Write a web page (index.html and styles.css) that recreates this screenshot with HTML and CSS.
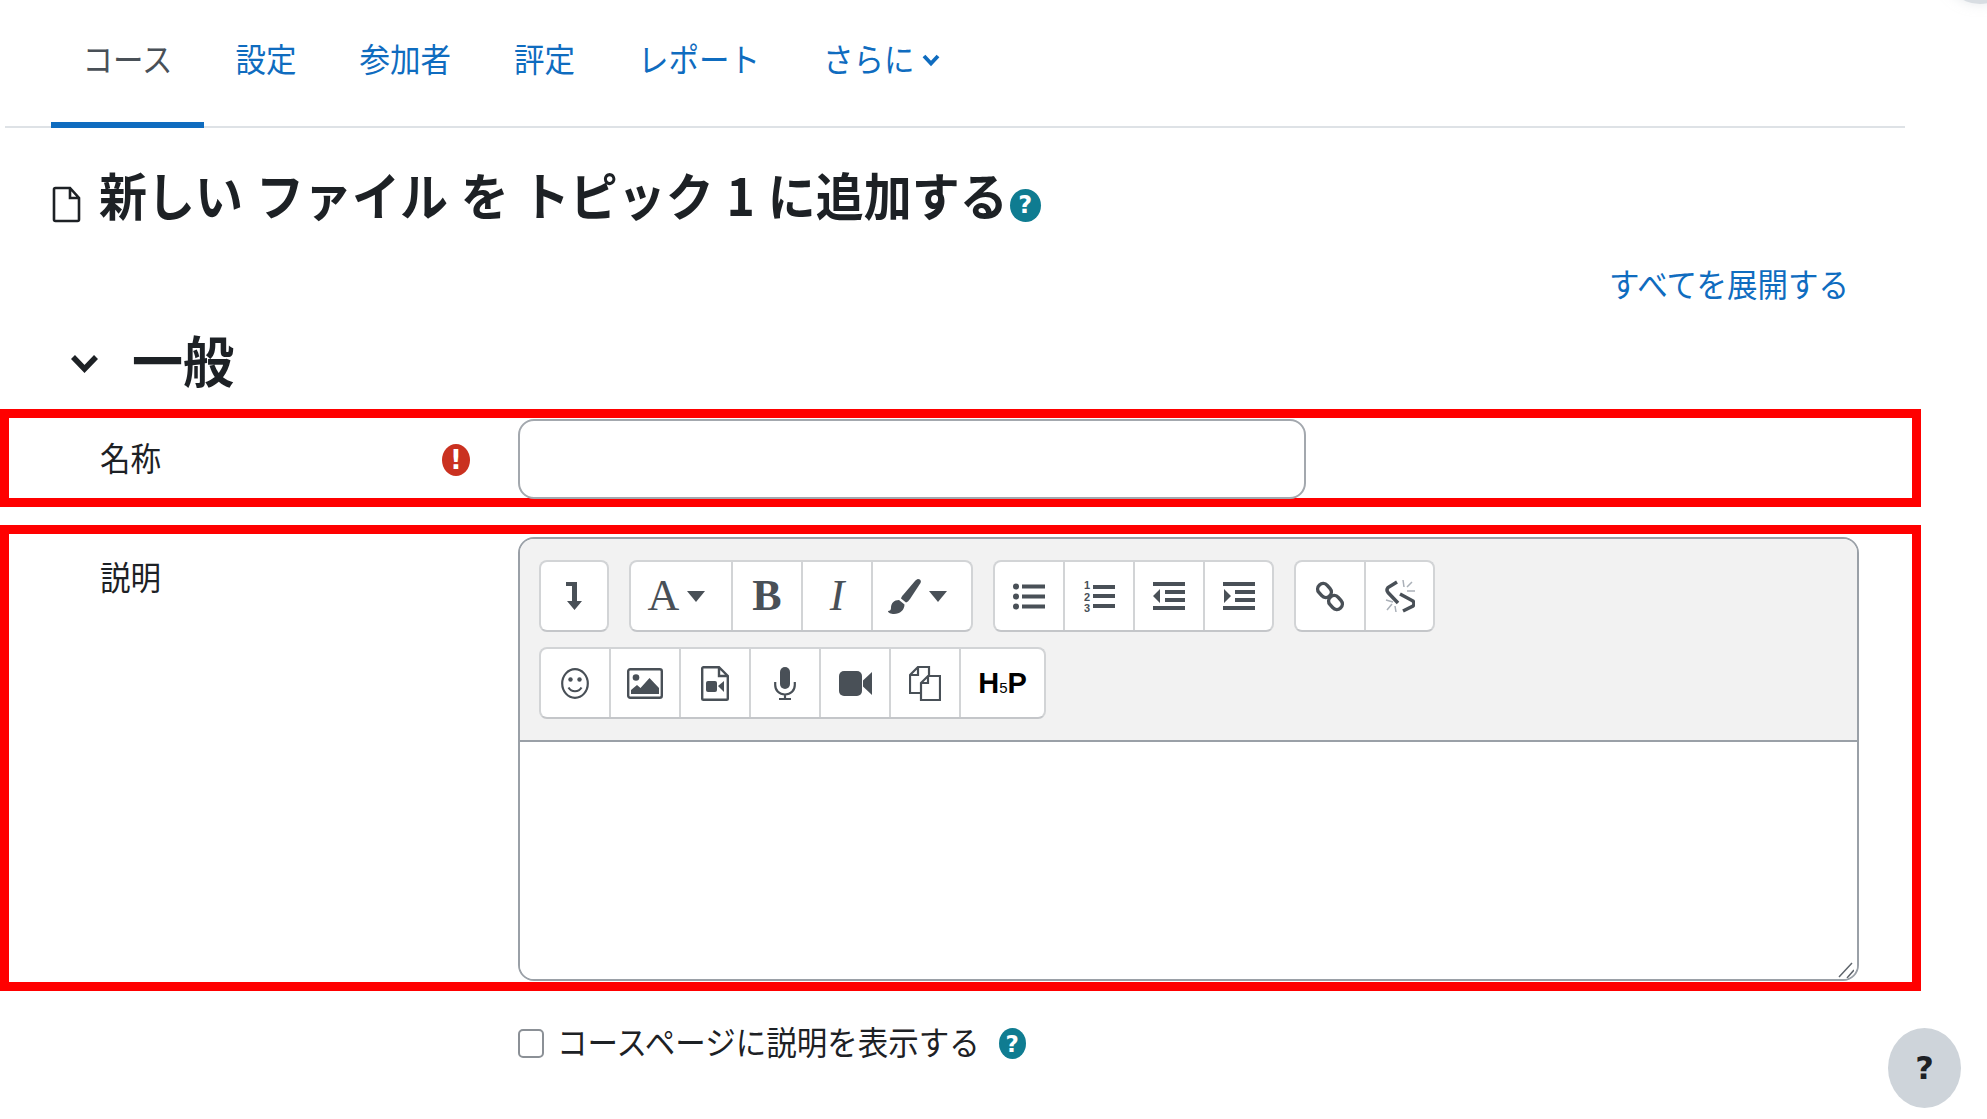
FILE: index.html
```html
<!DOCTYPE html>
<html lang="ja">
<head>
  <meta charset="UTF-8">
  <meta name="viewport" content="width=device-width, initial-scale=1.0">
  <title>新しい ファイル を トピック 1 に追加する</title>
  <link rel="stylesheet" href="styles.css">
</head>
<body>
  <div class="corner-shape"></div>

  <nav class="tabs">
    <a class="tab active"><span class="tall">コース</span></a>
    <a class="tab"><span class="tall">設定</span></a>
    <a class="tab"><span class="tall">参加者</span></a>
    <a class="tab"><span class="tall">評定</span></a>
    <a class="tab"><span class="tall">レポート</span></a>
    <a class="tab more"><span class="tall">さらに</span>
      <svg class="tab-chevron" viewBox="0 0 18 14"><path d="M2 3l7 7.500L16 3" fill="none" stroke="currentColor" stroke-width="3.800"/></svg>
    </a>
  </nav>

  <h1 class="page-title">
    <svg class="file-icon" viewBox="0 0 29 37"><path d="M2 3.500a1.500 1.500 0 0 1 1.500-1.500H18l9 10v21.500a1.500 1.500 0 0 1-1.500 1.500h-22a1.500 1.500 0 0 1-1.500-1.500zM18 2v10h9" fill="none" stroke="#1d2125" stroke-width="2.600"/></svg>
    <span class="tall">新しい ファイル を トピック 1 に追加する</span>
    <span class="help help-title">?</span>
  </h1>

  <div class="expand-row"><a class="expand-link"><span class="tall">すべてを展開する</span></a></div>

  <h2 class="section-title">
    <svg class="section-chevron" viewBox="0 0 29 21"><path d="M3 4l11.500 12L26 4" fill="none" stroke="#1d2125" stroke-width="5.500"/></svg>
    <span class="tall">一般</span>
  </h2>

  <div class="form-row name-row">
    <label class="field-label">
      <span class="tall">名称</span>
      <span class="required">!</span>
    </label>
    <input class="text-input" type="text">
  </div>

  <div class="form-row desc-row">
    <label class="field-label desc-label"><span class="tall">説明</span></label>
    <div class="editor">
      <div class="toolbar">
        <div class="tool-row">
          <div class="tool-group">
            <button class="tool single">
              <svg width="18" height="28" viewBox="0 0 18 28"><path d="M1 0h11v19h5l-7.500 9-7.500-9h5V4H1z"/></svg>
            </button>
          </div>
          <div class="tool-group">
            <button class="tool wide"><span class="serif">A</span><i class="caret"></i></button>
            <button class="tool"><span class="serif bold">B</span></button>
            <button class="tool"><span class="serif ital">I</span></button>
            <button class="tool wide">
              <svg width="33" height="35" viewBox="0 0 33 35"><path d="M30 0c2.500 0 3.500 2 2.500 4L22 20c-1 1.500-2.500 3-4 3.500l-5-4c.5-2 1.500-3 2.500-4L27 2c1-1 2-2 3-2zM11 21l5.500 4.500C16.500 31 12 35 6 35c-3 0-6-1-6-3 2 0 3-1 3-3 0-5 3-8 8-8z"/></svg>
              <i class="caret"></i>
            </button>
          </div>
          <div class="tool-group">
            <button class="tool">
              <svg width="32" height="27" viewBox="0 0 32 27"><circle cx="3" cy="3.500" r="3"/><circle cx="3" cy="13.500" r="3"/><circle cx="3" cy="23.500" r="3"/><path d="M9 1.500h23v4H9zM9 11.500h23v4H9zM9 21.500h23v4H9z"/></svg>
            </button>
            <button class="tool">
              <svg width="31" height="38" viewBox="0 0 31 38"><text class="num" x="0" y="12">1</text><text class="num" x="0" y="24">2</text><text class="num" x="0" y="35">3</text><path d="M9 8h22v4H9zM9 17h22v4H9zM9 27h22v4H9z"/></svg>
            </button>
            <button class="tool">
              <svg width="32" height="28" viewBox="0 0 32 28"><path d="M0 0h32v4H0zM12 8h20v4H12zM12 16h20v4H12zM0 24h32v4H0zM7 7v14L0 14z"/></svg>
            </button>
            <button class="tool">
              <svg width="32" height="28" viewBox="0 0 32 28"><path d="M0 0h32v4H0zM12 8h20v4H12zM12 16h20v4H12zM0 24h32v4H0zM1 7v14l7-7z"/></svg>
            </button>
          </div>
          <div class="tool-group">
            <button class="tool">
              <svg width="30" height="33" viewBox="0 0 30 33" fill="none" stroke="#495057" stroke-width="3.500"><rect x="2" y="5" width="15" height="11" rx="5.500" transform="rotate(48 9.500 10.500)"/><rect x="13" y="17" width="15" height="11" rx="5.500" transform="rotate(48 20.500 22.500)"/></svg>
            </button>
            <button class="tool">
              <svg width="30" height="33" viewBox="0 0 30 33" fill="none" stroke="#495057" stroke-width="3.500"><path d="M12 2L3 7.500Q1 10 3 12.500L13 23M15 14l13 7q2 3 0 5l-10 5"/><path class="spark" d="M18 0l1 7M27 2l-5 5M30 11h-8M1 20l7 2M2 30l5-6M11 32l-1-6"/></svg>
            </button>
          </div>
        </div>
        <div class="tool-row">
          <div class="tool-group">
            <button class="tool">
              <svg width="28" height="31" viewBox="0 0 28 31"><ellipse cx="14" cy="15.500" rx="12.800" ry="14.300" fill="none" stroke="#495057" stroke-width="2.200"/><circle cx="9.500" cy="11.500" r="2.200"/><circle cx="18.500" cy="11.500" r="2.200"/><path d="M7.500 19.500c3 5 10 5 13 0" fill="none" stroke="#495057" stroke-width="2.200"/></svg>
            </button>
            <button class="tool">
              <svg width="36" height="31" viewBox="0 0 36 31"><rect x="1.200" y="1.200" width="33.600" height="28.600" rx="2" fill="none" stroke="#495057" stroke-width="2.400"/><circle cx="9" cy="9.500" r="3.300"/><path d="M4 26v-4l6-5 3.500 3 9-10 9.500 10v6z"/></svg>
            </button>
            <button class="tool">
              <svg width="28" height="35" viewBox="0 0 28 35"><path d="M1.200 2.500a1.300 1.300 0 0 1 1.300-1.300H18L26.800 10v22.500a1.300 1.300 0 0 1-1.300 1.300h-23a1.300 1.300 0 0 1-1.300-1.300zM18 1.200V10h8.800" fill="none" stroke="#495057" stroke-width="2.400"/><rect x="5" y="15" width="11" height="11" rx="2"/><path d="M17 20l6-5v11z"/></svg>
            </button>
            <button class="tool">
              <svg width="22" height="33" viewBox="0 0 22 33"><rect x="6" y="0" width="10" height="22" rx="5"/><path d="M1.200 15v3c0 5.500 4 9.500 9.800 9.500s9.800-4 9.800-9.500v-3M11 27.500V32M5 32h12" fill="none" stroke="#495057" stroke-width="2.200"/></svg>
            </button>
            <button class="tool">
              <svg width="33" height="25" viewBox="0 0 33 25"><rect x="0" y="0" width="23" height="25" rx="5"/><path d="M24 9.500L33 1v23l-9-8.500z"/></svg>
            </button>
            <button class="tool">
              <svg width="32" height="35" viewBox="0 0 32 35" fill="none" stroke="#495057" stroke-width="2.200"><path d="M12 27H1V9l8-8h11v9M9 1v8H1"/><path d="M12 17l7-7h12v24H12zM19 10v7h-7"/></svg>
            </button>
            <button class="tool h5p-tool"><span class="h5p">H<small>5</small>P</span></button>
          </div>
        </div>
      </div>
      <div class="editor-body">
        <svg class="resize-grip" viewBox="0 0 16 18"><path d="M1 16L14 2M9 17l7-8" fill="none" stroke="#5f656c" stroke-width="1.500"/></svg>
      </div>
    </div>
  </div>

  <div class="check-row">
    <input class="check" type="checkbox">
    <span class="check-text"><span class="tall">コースページに説明を表示する</span></span>
    <span class="help help-check">?</span>
  </div>

  <button class="float-help">?</button>
</body>
</html>
```

FILE: styles.css
```css
* {
  box-sizing: border-box;
}

html,
body {
  margin: 0;
  height: 100%;
  overflow: hidden;
}

body {
  position: relative;
  background: #fff;
  color: #1d2125;
  font-family: "Noto Sans CJK JP", "Noto Sans", sans-serif;
  font-size: 30.500px;
}

.tall {
  display: inline-block;
  transform: translateY(-2px) scaleY(1.07);
}

.corner-shape {
  position: absolute;
  top: -70px;
  right: -30px;
  width: 74px;
  height: 74px;
  border-radius: 50%;
  background: #d8dde2;
  box-shadow: 0 0 12px rgba(206, 212, 218, 0.5);
}

/* tabs */
.tabs {
  display: flex;
  width: 1900px;
  height: 128px;
  margin-left: 5px;
  padding-left: 46px;
  border-bottom: 2px solid #dee2e6;
}

.tab {
  display: flex;
  align-items: center;
  gap: 8px;
  height: 126px;
  padding: 0 31.500px 7px;
  color: #0f6cbf;
  line-height: 40px;
  white-space: nowrap;
}

.tab.active {
  height: 128px;
  padding: 0 31.500px 3px;
  color: #495057;
  border-bottom: 6px solid #0f6cbf;
}

.tab-chevron {
  width: 18px;
  height: 14px;
}

/* title */
.page-title {
  display: flex;
  align-items: center;
  height: 48px;
  margin: 44px 0 0 52px;
  font-size: 48px;
  font-weight: 700;
  line-height: 48px;
  word-spacing: 2px;
  white-space: nowrap;
}

.file-icon {
  width: 29px;
  height: 37px;
  margin: 16px 18px 0 0;
}

.help {
  display: flex;
  align-items: center;
  justify-content: center;
  flex-shrink: 0;
  border-radius: 50%;
  background: #0f7c91;
  color: #fff;
  font-family: "DejaVu Sans", sans-serif;
  font-weight: 700;
}

.help-title {
  width: 31px;
  height: 33px;
  margin: 18px 0 0 2px;
  font-size: 24px;
}

.expand-row {
  display: flex;
  justify-content: flex-end;
  margin-top: 50px;
  padding-right: 138px;
  line-height: 30px;
}

.expand-link {
  color: #0f6cbf;
}

.section-title {
  display: flex;
  align-items: center;
  height: 56px;
  margin: 32px 0 21px 70px;
  font-size: 51px;
  font-weight: 700;
  line-height: 56px;
}

.section-chevron {
  width: 29px;
  height: 21px;
  margin: 6px 33px 0 0;
}

/* form rows */
.form-row {
  display: flex;
  align-items: flex-start;
  width: 1921px;
  border: 9px solid #f00;
}

.name-row {
  height: 98px;
  padding-top: 1px;
}

.desc-row {
  height: 466px;
  margin-top: 18px;
  padding-top: 3px;
}

.field-label {
  display: flex;
  align-items: center;
  justify-content: space-between;
  flex-shrink: 0;
  width: 509px;
  height: 79px;
  padding: 0 48px 0 91px;
  line-height: 40px;
}

.desc-label {
  height: 40px;
  margin-top: 21px;
}

.required {
  display: flex;
  align-items: center;
  justify-content: center;
  width: 28px;
  height: 32px;
  margin-top: 2px;
  border-radius: 50%;
  background: #ca3120;
  color: #fff;
  font-family: "DejaVu Sans", sans-serif;
  font-size: 26px;
  font-weight: 700;
}

.text-input {
  width: 788px;
  height: 80px;
  border: 2px solid #a3a8ae;
  border-radius: 16px;
  background: #fff;
  outline: none;
}

/* editor */
.editor {
  display: flex;
  flex-direction: column;
  width: 1341px;
  height: 444px;
  border: 2px solid #9aa0a7;
  border-radius: 16px;
  overflow: hidden;
}

.toolbar {
  display: flex;
  flex-direction: column;
  gap: 15px;
  height: 203px;
  padding: 21px 19px 0;
  background: #f2f2f2;
  border-bottom: 2px solid #9aa0a7;
}

.tool-row {
  display: flex;
  gap: 20px;
}

.tool-group {
  display: flex;
  height: 72px;
  background: #fff;
  border: 2px solid #d2d4d6;
  border-bottom-color: #c4c6c9;
  border-radius: 8px;
}

.tool {
  display: flex;
  align-items: center;
  justify-content: center;
  gap: 8px;
  width: 70px;
  padding: 0;
  background: none;
  border: none;
  border-left: 2px solid #d2d4d6;
  color: #495057;
  fill: #495057;
}

.tool:first-child {
  width: 68px;
  border-left: none;
}

.tool:last-child {
  width: 69px;
}

.tool.single {
  width: 66px;
}

.tool.wide {
  width: 100px;
  padding-right: 9px;
}

.tool.h5p-tool {
  width: 85px;
}

.tool svg {
  flex-shrink: 0;
}

.serif {
  font-family: "Liberation Serif", serif;
  font-size: 44px;
  line-height: 46px;
}

.bold {
  font-weight: 700;
}

.ital {
  padding: 0 4px;
  font-style: italic;
}

.caret {
  width: 0;
  height: 0;
  border-top: 11px solid #495057;
  border-left: 9.500px solid transparent;
  border-right: 9.500px solid transparent;
}

.num {
  font-family: "Liberation Sans", sans-serif;
  font-size: 11px;
  font-weight: 700;
}

.spark {
  stroke: #aab0b8;
  stroke-width: 1.500;
}

.h5p {
  margin-top: 4px;
  color: #000;
  font-family: "Liberation Sans", sans-serif;
  font-size: 29px;
  font-weight: 700;
  line-height: 30px;
}

.h5p small {
  font-size: 15px;
  font-weight: 400;
}

.editor-body {
  position: relative;
  flex: 1;
  background: #fff;
}

.resize-grip {
  position: absolute;
  right: 3px;
  bottom: 0;
  width: 16px;
  height: 18px;
}

/* checkbox row */
.check-row {
  display: flex;
  align-items: center;
  height: 31px;
  margin-top: 37px;
  padding-left: 518px;
}

.check {
  width: 26px;
  height: 29px;
  margin: 0 13px 0 0;
  appearance: none;
  border: 2px solid #8b9096;
  border-radius: 5px;
  background: #fff;
}

.check-text {
  line-height: 31px;
  white-space: nowrap;
}

.help-check {
  width: 27px;
  height: 31px;
  margin-left: 19px;
  font-size: 23px;
}

.float-help {
  position: absolute;
  left: 1888px;
  top: 1028px;
  width: 73px;
  height: 80px;
  border: none;
  border-radius: 50%;
  background: #ced4da;
  color: #1d2125;
  font-family: "DejaVu Sans", sans-serif;
  font-size: 32px;
  font-weight: 700;
}
```
